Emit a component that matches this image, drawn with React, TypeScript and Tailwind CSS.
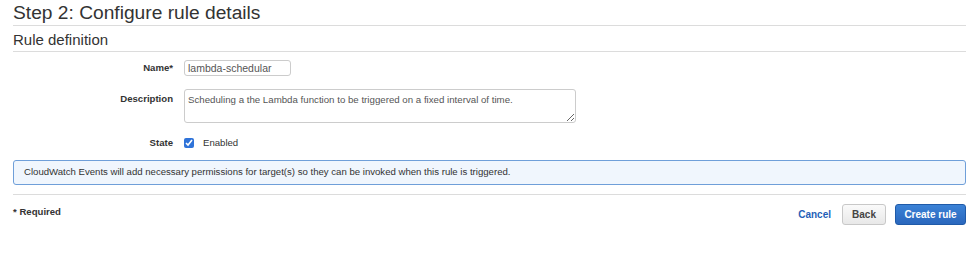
import React from "react";

export default function App() {
  return (
    <div className="w-[977px] h-[271px] bg-white pl-[13px] pr-[11px] text-[#333] [font-family:'Liberation_Sans',Arial,sans-serif]">
      <h1 className="text-[19.2px] leading-[24px] pt-[1px] text-[#333] border-b border-[#dcdcdc]">Step 2: Configure rule details</h1>
      <h2 className="text-[15px] leading-[18px] pt-[5px] pb-[2px] text-[#333] border-b border-[#dcdcdc]">Rule definition</h2>

      <div className="grid grid-cols-[160px_1fr] gap-x-[11px] pt-[8px] text-[9.6px]">
        <div className="text-right font-bold leading-[16px]">Name*</div>
        <div className="h-[16px]">
          <input
            readOnly
            value="lambda-schedular"
            className="block w-[107px] h-[16px] border border-[#ccc] rounded-[3px] px-[3px] text-[10.5px] leading-[14px] text-[#555] outline-none"
          />
        </div>

        <div className="text-right font-bold pt-[16px] leading-[14px]">Description</div>
        <div className="pt-[13px]">
          <textarea
            readOnly
            value="Scheduling a the Lambda function to be triggered on a fixed interval of time."
            className="block w-[392px] h-[34px] border border-[#ccc] rounded-[3px] px-[3px] pt-[3px] text-[9.7px] leading-[13px] text-[#555] outline-none resize"
          />
        </div>

        <div className="text-right font-bold pt-[13px] leading-[14px]">State</div>
        <div className="pt-[13px] flex items-center gap-[9px] leading-[14px]">
          <input type="checkbox" checked readOnly className="w-[10px] h-[10px] m-0 accent-[#2f73d9]" />
          <span className="text-[#333]">Enabled</span>
        </div>
      </div>

      <div className="mt-[10px] h-[25px] border border-[#6f9fd9] bg-[#f0f6fd] rounded-[3px] pl-[10px] flex items-center text-[9.6px] text-[#333]">
        CloudWatch Events will add necessary permissions for target(s) so they can be invoked when this rule is triggered.
      </div>

      <div className="mt-[9px] border-t border-[#dcdcdc] flex items-start justify-between">
        <div className="pt-[10px] text-[9.6px] font-bold text-[#333]">* Required</div>
        <div className="pt-[9px] flex items-center">
          <span className="text-[10px] font-bold text-[#1f5fb8] mr-[11px]">Cancel</span>
          <button className="w-[44px] h-[21px] border border-[#c8c8c8] rounded-[3px] bg-gradient-to-b from-[#fafafa] to-[#e8e8e8] text-[10px] font-bold text-[#444] mr-[9px]">Back</button>
          <button className="w-[71px] h-[21px] border border-[#1f5aa8] rounded-[3px] bg-gradient-to-b from-[#3b82d6] to-[#2a67bd] text-[10px] font-bold text-white">Create rule</button>
        </div>
      </div>
    </div>
  );
}
